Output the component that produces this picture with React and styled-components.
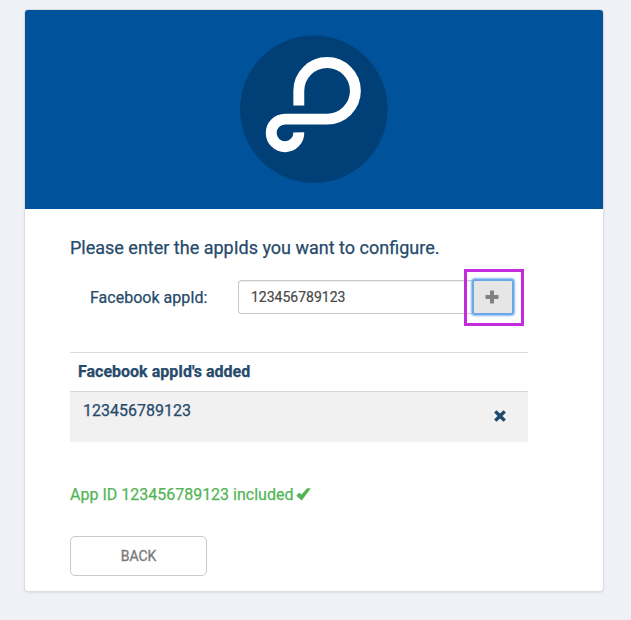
import React from "react";
import styled, { createGlobalStyle } from "styled-components";

const GlobalStyle = createGlobalStyle`
  * { box-sizing: border-box; }
  body { margin: 0; background: #eff1f6; font-family: Roboto, sans-serif; color: #264a6b; -webkit-text-stroke: 0.25px; }
`;

const Page = styled.main`
  height: 620px;
  padding: 10px 28px 0 25px;
  overflow: hidden;
`;

const Card = styled.section`
  height: 581px;
  background: #fff;
  border-radius: 3px;
  overflow: hidden;
  box-shadow: 0 0 0 1px #dcdde0, 0 1px 3px rgba(0, 0, 0, 0.16);
`;

const Banner = styled.header`
  height: 199px;
  padding: 25px 0 0 215px;
  background: #00539b;
`;

const Logo = styled.svg`
  display: block;
  width: 148px;
  height: 148px;
`;

const Body = styled.div`
  display: flex;
  flex-direction: column;
  width: 503px;
  padding: 27px 0 0 45px;
`;

const Title = styled.h1`
  margin: 0;
  font-size: 18px;
  font-weight: 400;
  line-height: 24px;
  white-space: nowrap;
`;

const FormRow = styled.div`
  display: flex;
  height: 34px;
  margin-top: 20px;
  padding-left: 20px;
`;

const Label = styled.label`
  width: 148px;
  font-size: 16px;
  line-height: 36px;
`;

const Input = styled.input`
  width: 235px;
  height: 34px;
  padding: 0 12px;
  border: 1px solid #c8c9ca;
  border-right: 0;
  border-radius: 4px 0 0 4px;
  box-shadow: inset 0 1px 1px rgba(0, 0, 0, 0.07);
  outline: none;
  color: #484848;
  font: 14px/32px Roboto, sans-serif;
  -webkit-text-stroke: 0.2px;
`;

const AddWrap = styled.div`
  position: relative;
  width: 41px;
`;

const AddButton = styled.button`
  display: flex;
  align-items: center;
  justify-content: center;
  width: 40px;
  height: 34px;
  padding: 0 2px 0 0;
  border: 1px solid #69a7ea;
  border-radius: 2px;
  background: #e6e6e6;
  box-shadow: 0 0 1px 1px #69a7ea, 0 0 2px 2px #8dbff3;
`;

const Highlight = styled.div`
  position: absolute;
  top: -11px;
  left: -9px;
  width: 60px;
  height: 57px;
  border: 3px solid #c32bdd;
  pointer-events: none;
`;

const List = styled.section`
  width: 458px;
  margin-top: 38px;
  border-top: 1px solid #dcdcdc;
`;

const ListTitle = styled.h2`
  height: 38px;
  margin: 0;
  padding-left: 8px;
  font-size: 16px;
  font-weight: 700;
  line-height: 37px;
`;

const ListItem = styled.div`
  display: flex;
  justify-content: space-between;
  height: 51px;
  padding: 0 21px 0 13px;
  border-top: 1px solid #d9d9d9;
  background: #f1f1f1;
  font-size: 16px;
  line-height: 38px;
`;

const RemoveButton = styled.button`
  display: flex;
  padding: 18px 0 0;
  border: 0;
  background: none;
`;

const Status = styled.p`
  display: flex;
  gap: 3px;
  height: 24px;
  margin: 41px 0 0;
  color: #54b558;
  font-size: 16px;
  line-height: 24px;
`;

const Check = styled.svg`
  width: 15px;
  height: 13px;
  margin-top: 5px;
`;

const BackButton = styled.button`
  width: 137px;
  height: 40px;
  margin-top: 29px;
  padding: 0;
  border: 1px solid #c9cacb;
  border-radius: 5px;
  background: #fff;
  color: #7b7b7b;
  font: 14px Roboto, sans-serif;
  -webkit-text-stroke: 0.35px;
`;

export default function App() {
  return (
    <Page>
      <GlobalStyle />
      <Card>
        <Banner>
          <Logo viewBox="240 35 148 148" aria-label="Parse">
            <circle cx="313.8" cy="109.2" r="73.8" fill="#004077" />
            <path
              d="M298.8 105.4V90.8A28.3 28.3 0 1 1 327.1 119.1H284.9A13.8 13.8 0 1 0 298.8 132.4"
              fill="none"
              stroke="#fff"
              strokeWidth="10.9"
            />
          </Logo>
        </Banner>
        <Body>
          <Title>Please enter the appIds you want to configure.</Title>
          <FormRow>
            <Label htmlFor="app-id">Facebook appId:</Label>
            <Input id="app-id" defaultValue="123456789123" />
            <AddWrap>
              <AddButton aria-label="Add">
                <svg width="14" height="14" viewBox="0 0 14 14">
                  <path
                    d="M5.5.5h3q.5 0 .5.5v4h4q.5 0 .5.5v3q0 .5-.5.5H9v4q0 .5-.5.5h-3q-.5 0-.5-.5V9H1q-.5 0-.5-.5v-3Q.5 5 1 5h4V1q0-.5.5-.5z"
                    fill="#828282"
                  />
                </svg>
              </AddButton>
              <Highlight />
            </AddWrap>
          </FormRow>
          <List>
            <ListTitle>Facebook appId's added</ListTitle>
            <ListItem>
              <span>123456789123</span>
              <RemoveButton aria-label="Remove">
                <svg width="13" height="12" viewBox="0.5 0 13 12">
                  <path
                    d="M3 .3 6.5 3.6 10 .3 12.4 2.6 9 6l3.4 3.4L10 11.7 6.5 8.4 3 11.7.6 9.4 4 6 .6 2.6z"
                    fill="#204a70"
                  />
                </svg>
              </RemoveButton>
            </ListItem>
          </List>
          <Status>
            App ID 123456789123 included
            <Check viewBox="0 0 15 13">
              <path
                d="M.6 7.3 2.8 5q.4-.4.8 0L5.5 6.6 10.6.7q.3-.4.8-.4h2.8q.6 0 .3.5L6.2 12.1q-.4.6-.9.1L.6 8.1q-.3-.4 0-.8z"
                fill="#54b558"
              />
            </Check>
          </Status>
          <BackButton>BACK</BackButton>
        </Body>
      </Card>
    </Page>
  );
}
